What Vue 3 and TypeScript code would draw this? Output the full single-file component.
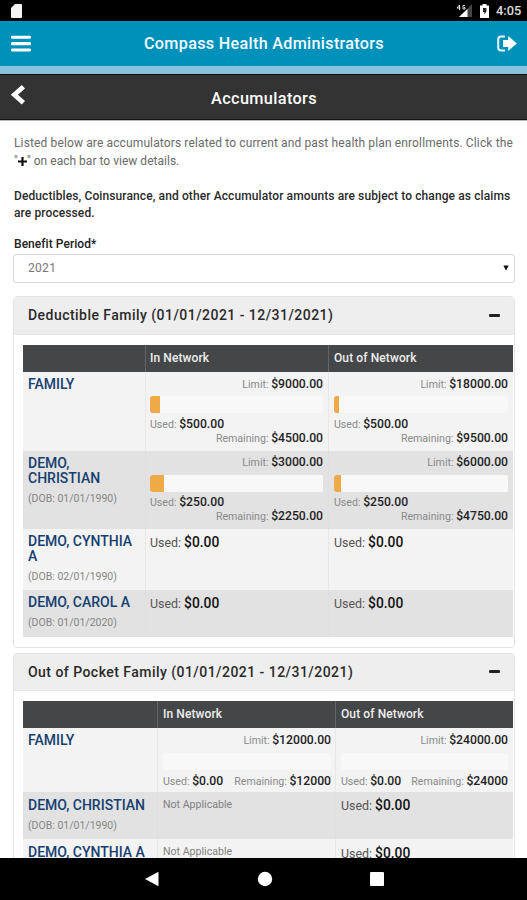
<script setup lang="ts">
interface Cell {
  kind: 'meter' | 'used' | 'na'
  limit?: string
  used?: string
  remaining?: string
  percent?: number
}
interface Member {
  name: string[]
  dob?: string
  height: string
  cells: Cell[]
}
interface Panel {
  id: string
  title: string
  inline: boolean
  members: Member[]
}

const none: Cell = { kind: 'used', used: '$0.00' }
const na: Cell = { kind: 'na' }

const panels: Panel[] = [
  {
    id: 'deductible',
    title: 'Deductible Family (01/01/2021 - 12/31/2021)',
    inline: false,
    members: [
      {
        name: ['FAMILY'],
        height: 'tall-first',
        cells: [
          { kind: 'meter', limit: '$9000.00', used: '$500.00', remaining: '$4500.00', percent: 5.6 },
          { kind: 'meter', limit: '$18000.00', used: '$500.00', remaining: '$9500.00', percent: 2.9 },
        ],
      },
      {
        name: ['DEMO,', 'CHRISTIAN'],
        dob: '(DOB: 01/01/1990)',
        height: 'tall',
        cells: [
          { kind: 'meter', limit: '$3000.00', used: '$250.00', remaining: '$2250.00', percent: 8.3 },
          { kind: 'meter', limit: '$6000.00', used: '$250.00', remaining: '$4750.00', percent: 4.2 },
        ],
      },
      { name: ['DEMO, CYNTHIA', 'A'], dob: '(DOB: 02/01/1990)', height: 'medium', cells: [none, none] },
      { name: ['DEMO, CAROL A'], dob: '(DOB: 01/01/2020)', height: 'short', cells: [none, none] },
    ],
  },
  {
    id: 'pocket',
    title: 'Out of Pocket Family (01/01/2021 - 12/31/2021)',
    inline: true,
    members: [
      {
        name: ['FAMILY'],
        height: 'inline-row',
        cells: [
          { kind: 'meter', limit: '$12000.00', used: '$0.00', remaining: '$12000', percent: 0 },
          { kind: 'meter', limit: '$24000.00', used: '$0.00', remaining: '$24000', percent: 0 },
        ],
      },
      { name: ['DEMO, CHRISTIAN'], dob: '(DOB: 01/01/1990)', height: 'short', cells: [na, none] },
      { name: ['DEMO, CYNTHIA A'], height: 'short', cells: [na, none] },
    ],
  },
]
</script>

<template>
  <div class="screen">
    <div class="status">
      <svg class="sd" width="11" height="14" viewBox="0 0 11 14"><path d="M4 0h6q1 0 1 1v12q0 1-1 1H1q-1 0-1-1V4z" fill="#f4f4f4" /></svg>
      <div class="status-right">
        <svg width="17" height="14" viewBox="0 0 17 14">
          <path d="M16 0v13H3z" fill="#444" /><path d="M11.5 5v8H3z" fill="#fff" />
          <path d="M3.5 1L1 4h3.5M3.5 1v5M9 1.5H7v3.5h2V3.5H8" stroke="#ddd" fill="none" />
        </svg>
        <svg width="9" height="14" viewBox="0 0 9 14"><path d="M2.5 0h4v1.5H9V14H0V1.5h2.5z" fill="#fff" /><path d="M3 4h3.4v3.6L4.4 10.4V8H3z" fill="#222" /></svg>
        <span class="clock">4:05</span>
      </div>
    </div>

    <header class="brand">
      <svg width="20" height="17" viewBox="0 0 20 17"><path d="M1.2 2.2h17.4M1.2 8.6h17.4M1.2 15h17.4" stroke="#fff" stroke-width="3.1" stroke-linecap="round" /></svg>
      <h1>Compass Health Administrators</h1>
      <svg width="20" height="17" viewBox="0 0 20 17">
        <path d="M8 1.6H4.2Q1.2 1.6 1.2 4.6v7.8q0 3 3 3H8" stroke="#e6f4fa" stroke-width="2" fill="none" />
        <path d="M6 5h5.2V.9L19.8 8.5 11.2 16.1V12H6z" fill="#fff" />
      </svg>
    </header>
    <div class="band"></div>

    <div class="titlebar">
      <svg width="16" height="20" viewBox="0 0 16 20"><path d="M13.4 1.8L4.4 9.8l9 8" stroke="#fff" stroke-width="4.8" fill="none" /></svg>
      <h2>Accumulators</h2>
    </div>

    <main>
      <p class="intro">
        <span>Listed below are accumulators related to current and past health plan enrollments. Click the</span>
        <span class="hint">"<svg class="plus" width="9" height="9" viewBox="0 0 9 9"><path d="M4.5 0v9M0 4.5h9" stroke="#111" stroke-width="2.2" /></svg>" on each bar to view details.</span>
      </p>
      <p class="note">
        <span>Deductibles, Coinsurance, and other Accumulator amounts are subject to change as claims</span>
        <span>are processed.</span>
      </p>
      <div class="label">Benefit Period*</div>
      <div class="select">
        <span>2021</span>
        <svg width="6" height="6" viewBox="0 0 6 6"><path d="M.4.5h5.2L3 5.8z" fill="#111" /></svg>
      </div>

      <section v-for="p in panels" :key="p.id" class="panel" :class="p.id">
        <div class="panel-head">
          <h3>{{ p.title }}</h3>
          <span class="minus"></span>
        </div>
        <div class="table">
          <div class="row thead">
            <div class="cell"></div>
            <div class="cell">In Network</div>
            <div class="cell">Out of Network</div>
          </div>
          <div v-for="m in p.members" :key="m.name[0]" class="row" :class="m.height">
            <div class="cell who">
              <span v-for="n in m.name" :key="n" class="name">{{ n }}</span>
              <span v-if="m.dob" class="dob">{{ m.dob }}</span>
            </div>
            <div v-for="(c, i) in m.cells" :key="i" class="cell">
              <div v-if="c.kind === 'meter'" class="meter" :class="{ inline: p.inline }">
                <div class="limit"><i class="k">Limit: </i><b>{{ c.limit }}</b></div>
                <div class="bar"><div class="fill" :style="{ width: c.percent + '%' }"></div></div>
                <div class="amounts">
                  <div class="spent"><i class="k">Used: </i><b>{{ c.used }}</b></div>
                  <div class="left"><i class="k">Remaining: </i><b>{{ c.remaining }}</b></div>
                </div>
              </div>
              <div v-else-if="c.kind === 'used'" class="plain"><i>Used: </i><b>{{ c.used }}</b></div>
              <div v-else class="na">Not Applicable</div>
            </div>
          </div>
        </div>
      </section>
    </main>

    <nav class="nav">
      <svg width="14" height="16" viewBox="0 0 14 16"><path d="M0 8L13.5.8v14.4z" fill="#fff" /></svg>
      <svg width="16" height="16" viewBox="0 0 16 16"><circle cx="8" cy="8" r="7.2" fill="#fff" /></svg>
      <svg width="14" height="14" viewBox="0 0 14 14"><rect width="14" height="14" rx="1" fill="#fff" /></svg>
    </nav>
  </div>
</template>

<style>
body { margin: 0; background: #fff; overflow: hidden; }
</style>

<style scoped>
* { box-sizing: border-box; }
.screen { width: 527px; height: 900px; display: flex; flex-direction: column; overflow: hidden; font-family: Roboto, sans-serif; color: #222; white-space: nowrap; background: #fff; }
h1, h2, h3, p { margin: 0; font-weight: 500; }
i { font-style: normal; }
b { font-weight: 500; }
svg { flex: none; }
.status { height: 21px; flex: none; background: #000; display: flex; justify-content: space-between; padding: 4px 5px 0 11px; }
.status-right { display: flex; gap: 7px; }
.clock { color: #ddd; font-size: 12.8px; font-weight: 500; line-height: 14px; width: 26px; }
.brand { height: 45px; flex: none; background: #0091bb; display: flex; align-items: center; justify-content: space-between; padding: 0 10px 0 11px; }
.brand h1 { color: #f2f9fc; font-size: 16.2px; letter-spacing: .3px; }
.band { height: 8px; flex: none; background: #87c3dc; }
.titlebar { height: 46px; flex: none; background: #333; border-top: 1px solid #170b09; border-bottom: 1px solid #161616; display: grid; grid-template-columns: 1fr auto 1fr; align-items: center; padding: 0 9px 0 10px; }
.titlebar svg { margin-top: -5px; }
.titlebar h2 { color: #fff; font-size: 16.3px; letter-spacing: .35px; line-height: 20px; padding-top: 3px; }
main { flex: 1; min-height: 0; overflow: hidden; border-top: 1px solid #bbb; padding: 14px 12px 0 13px; }
main p span { display: block; line-height: 17.5px; }
.intro { font-size: 12px; color: #6a6a6a; font-weight: 400; letter-spacing: .13px; }
.intro .hint { letter-spacing: .02px; }
.note { font-size: 12px; color: #2a2a2a; margin-top: 17.5px; letter-spacing: .105px; }
.plus { vertical-align: -1px; }
.intro, .note, .label { padding-left: 1px; }
.label { font-size: 12px; font-weight: 500; color: #222; line-height: 16px; margin-top: 13px; letter-spacing: .05px; }
.select { height: 29px; margin-top: 2px; border: 1px solid #d6d6d6; border-radius: 3px; display: flex; align-items: center; justify-content: space-between; padding: 0 5px 0 14px; font-size: 12px; color: #777; letter-spacing: .3px; }
.panel { border: 1px solid #e5e5e5; border-radius: 4px; padding: 0 1px 10px 9px; }
.deductible { margin-top: 13px; height: 352px; }
.pocket { margin-top: 5px; height: 300px; }
.panel-head { height: 38px; margin: 0 -1px 0 -9px; background: #eee; border-bottom: 1px solid #e8e8e8; display: flex; align-items: center; justify-content: space-between; padding: 0 14px; }
.pocket .panel-head { height: 37px; }
.panel-head h3 { font-size: 14px; color: #2a2a2a; letter-spacing: .46px; }
.minus { width: 11px; height: 3px; background: #222; border-radius: 1px; }
.table { margin-top: 10px; }
.row { display: grid; grid-template-columns: 123px 183px 1fr; background: #f3f3f3; }
.pocket .row { grid-template-columns: 135px 178px 1fr; }
.row:nth-child(odd) { background: #e2e2e2; }
.cell { border-right: 1px solid #e7e7e7; padding: 0 5px 0 4px; min-width: 0; }
.cell:first-child { padding-left: 5px; }
.pocket .cell:nth-child(2) { padding-left: 5px; padding-right: 4px; }
.row:nth-child(odd) .cell { border-color: #dfdfdf; }
.row .cell:last-child { border-right: 0; padding-left: 5px; }
.row.thead { height: 27px; background: #454648; color: #eee; font-size: 12px; font-weight: 500; line-height: 26px; letter-spacing: .1px; }
.row.thead .cell { border-color: #646567; }
.tall-first { height: 79px; }
.tall { height: 78px; }
.medium { height: 61px; }
.short { height: 47.5px; }
.inline-row { height: 64px; }
.who { display: flex; flex-direction: column; padding-top: 5.6px; }
.name { font-size: 14px; font-weight: 500; line-height: 15px; color: #15406f; }
.dob { font-size: 10.5px; line-height: 14px; color: #858585; margin-top: 6px; }
.pocket .short .who { padding-top: 6px; }
.meter { font-size: 12.2px; line-height: 14px; padding-top: 5px; }
.tall .meter { padding-top: 4px; }
.k { color: #8a8a8a; font-size: 10.6px; }
.limit, .left { text-align: right; }
.bar { height: 17px; margin-top: 5px; background: #f8f8f8; border-radius: 2px; overflow: hidden; }
.fill { height: 100%; background: #efaa48; border-radius: 2px 0 0 2px; }
.amounts { margin-top: 3px; }
.tall-first .bar { margin-top: 4.5px; }
.tall-first .amounts { margin-top: 3.5px; }
.amounts .left { margin-top: -.3px; }
.inline .amounts { display: flex; justify-content: space-between; margin-top: 4px; }
.inline .amounts .left { margin-top: 0; }
.plain { font-size: 13.8px; line-height: 16px; padding-top: 5px; }
.pocket .plain { padding-top: 5.6px; }
.plain i { color: #555; font-size: 12.4px; }
.plain b { color: #111; }
.na { font-size: 10.6px; color: #808080; line-height: 14px; padding-top: 6px; }
.nav { height: 42px; flex: none; background: #000; display: flex; align-items: center; justify-content: space-between; padding: 0 143px 0 145px; }
</style>
